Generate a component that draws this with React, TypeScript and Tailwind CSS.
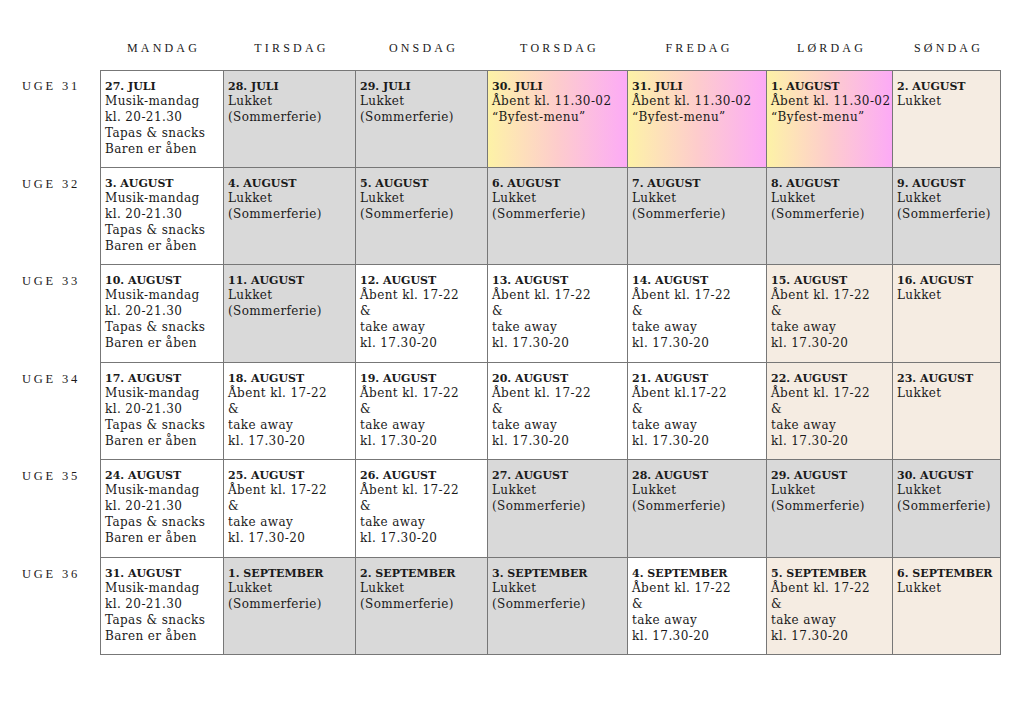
import React from 'react';

type Kind = 'w' | 'g' | 'b' | 'f';
type Cell = { date: string; lines: string[]; kind: Kind };

const days = ['MANDAG', 'TIRSDAG', 'ONSDAG', 'TORSDAG', 'FREDAG', 'LØRDAG', 'SØNDAG'];

const musik = ['Musik-mandag', 'kl. 20-21.30', 'Tapas & snacks', 'Baren er åben'];
const lukket = ['Lukket', '(Sommerferie)'];
const aabent = ['Åbent kl. 17-22', '&', 'take away', 'kl. 17.30-20'];
const byfest = ['Åbent kl. 11.30-02', '“Byfest-menu”'];

const weeks: { label: string; cells: Cell[] }[] = [
  {
    label: 'UGE 31',
    cells: [
      { date: '27. JULI', lines: musik, kind: 'w' },
      { date: '28. JULI', lines: lukket, kind: 'g' },
      { date: '29. JULI', lines: lukket, kind: 'g' },
      { date: '30. JULI', lines: byfest, kind: 'f' },
      { date: '31. JULI', lines: byfest, kind: 'f' },
      { date: '1. AUGUST', lines: byfest, kind: 'f' },
      { date: '2. AUGUST', lines: ['Lukket'], kind: 'b' },
    ],
  },
  {
    label: 'UGE 32',
    cells: [
      { date: '3. AUGUST', lines: musik, kind: 'w' },
      { date: '4. AUGUST', lines: lukket, kind: 'g' },
      { date: '5. AUGUST', lines: lukket, kind: 'g' },
      { date: '6. AUGUST', lines: lukket, kind: 'g' },
      { date: '7. AUGUST', lines: lukket, kind: 'g' },
      { date: '8. AUGUST', lines: lukket, kind: 'g' },
      { date: '9. AUGUST', lines: lukket, kind: 'g' },
    ],
  },
  {
    label: 'UGE 33',
    cells: [
      { date: '10. AUGUST', lines: musik, kind: 'w' },
      { date: '11. AUGUST', lines: lukket, kind: 'g' },
      { date: '12. AUGUST', lines: aabent, kind: 'w' },
      { date: '13. AUGUST', lines: aabent, kind: 'w' },
      { date: '14. AUGUST', lines: aabent, kind: 'w' },
      { date: '15. AUGUST', lines: aabent, kind: 'b' },
      { date: '16. AUGUST', lines: ['Lukket'], kind: 'b' },
    ],
  },
  {
    label: 'UGE 34',
    cells: [
      { date: '17. AUGUST', lines: musik, kind: 'w' },
      { date: '18. AUGUST', lines: aabent, kind: 'w' },
      { date: '19. AUGUST', lines: aabent, kind: 'w' },
      { date: '20. AUGUST', lines: aabent, kind: 'w' },
      { date: '21. AUGUST', lines: ['Åbent kl.17-22', '&', 'take away', 'kl. 17.30-20'], kind: 'w' },
      { date: '22. AUGUST', lines: aabent, kind: 'b' },
      { date: '23. AUGUST', lines: ['Lukket'], kind: 'b' },
    ],
  },
  {
    label: 'UGE 35',
    cells: [
      { date: '24. AUGUST', lines: musik, kind: 'w' },
      { date: '25. AUGUST', lines: aabent, kind: 'w' },
      { date: '26. AUGUST', lines: aabent, kind: 'w' },
      { date: '27. AUGUST', lines: lukket, kind: 'g' },
      { date: '28. AUGUST', lines: lukket, kind: 'g' },
      { date: '29. AUGUST', lines: lukket, kind: 'g' },
      { date: '30. AUGUST', lines: lukket, kind: 'g' },
    ],
  },
  {
    label: 'UGE 36',
    cells: [
      { date: '31. AUGUST', lines: musik, kind: 'w' },
      { date: '1. SEPTEMBER', lines: lukket, kind: 'g' },
      { date: '2. SEPTEMBER', lines: lukket, kind: 'g' },
      { date: '3. SEPTEMBER', lines: lukket, kind: 'g' },
      { date: '4. SEPTEMBER', lines: aabent, kind: 'w' },
      { date: '5. SEPTEMBER', lines: aabent, kind: 'b' },
      { date: '6. SEPTEMBER', lines: ['Lukket'], kind: 'b' },
    ],
  },
];

const bg: Record<Kind, string> = {
  w: 'bg-white',
  g: 'bg-[#d9d9d9]',
  b: 'bg-[#f5ece2]',
  f: 'bg-gradient-to-r from-[#fdf2a6] via-[#fdcccc] to-[#fcaaf6]',
};

const serif = "font-['DejaVu_Serif',serif]";
const caps = "font-['Liberation_Serif',serif]";

export default function App() {
  return (
    <div className="w-[1024px] h-[724px] bg-white text-[#1a1a1a]">
      <div className="grid grid-cols-[100px_124px_132px_132px_140px_139px_126px_108px] grid-rows-[70px_repeat(6,97.5px)]">
        <div />
        {days.map((d) => (
          <div key={d} className={`${caps} flex items-end justify-center pb-[14px] pl-[3px] text-[12px] leading-[16px] tracking-[3.2px]`}>
            {d}
          </div>
        ))}
        {weeks.map((wk, r) => (
          <React.Fragment key={wk.label}>
            <div className={`${caps} pt-[10px] pl-[2px] text-center text-[12.5px] leading-[12px] tracking-[2.8px]`}>{wk.label}</div>
            {wk.cells.map((c, i) => (
              <div
                key={c.date}
                className={`${bg[c.kind]} ${serif} border-r border-b border-[#777] pl-[4px] pt-[10px] ${r === 0 ? 'border-t pt-[9px]' : ''} ${i === 0 ? 'border-l' : ''}`}
              >
                <div className="text-[11px] font-bold leading-[12px]">{c.date}</div>
                {c.lines.map((l, k) => (
                  <div key={k} className="text-[12px] leading-[16px] tracking-[0.4px] whitespace-nowrap">
                    {l}
                  </div>
                ))}
              </div>
            ))}
          </React.Fragment>
        ))}
      </div>
    </div>
  );
}
